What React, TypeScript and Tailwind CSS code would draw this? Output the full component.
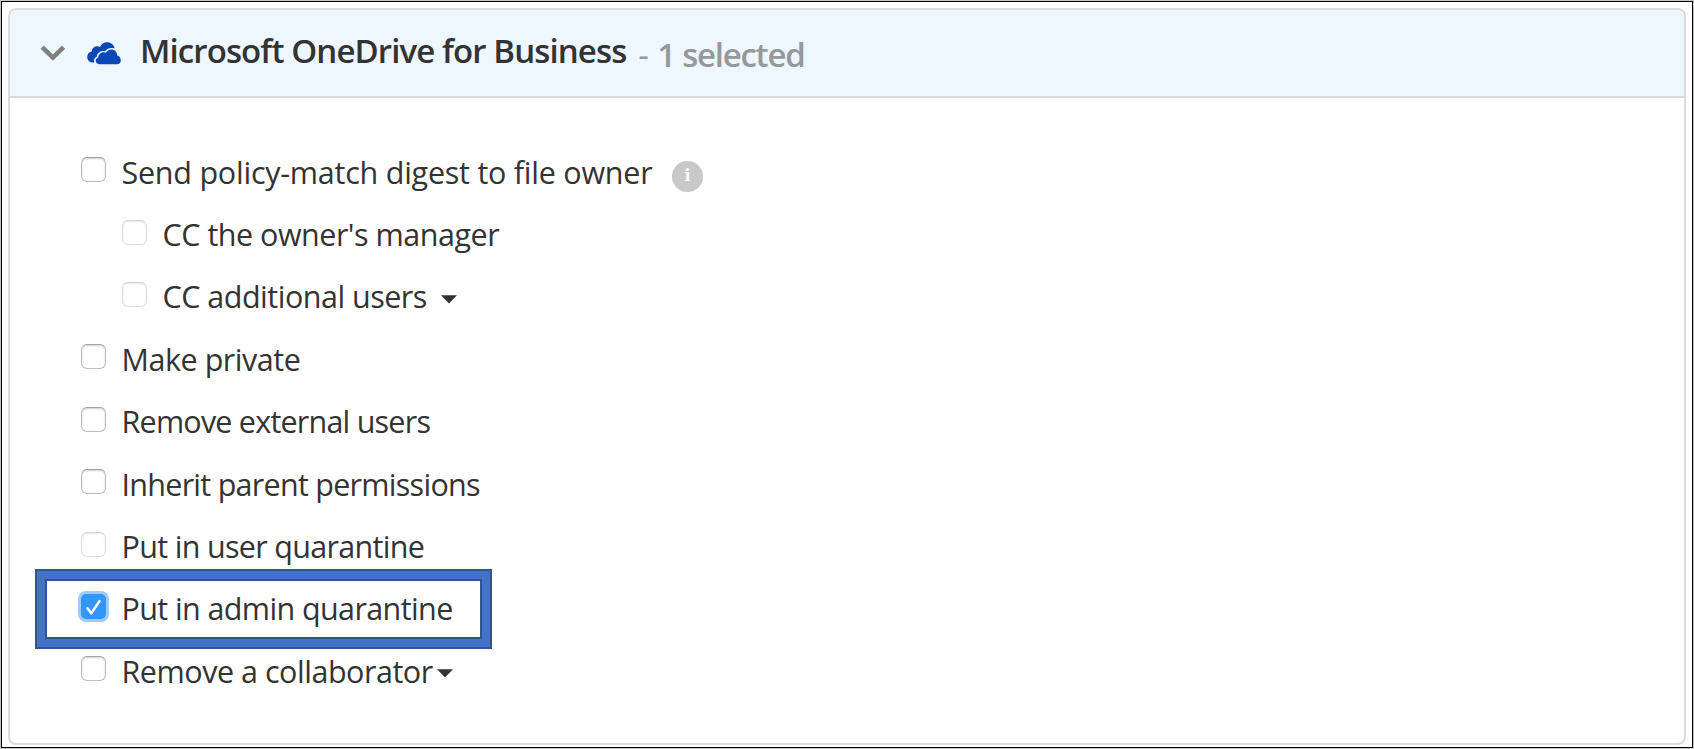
import clsx from "clsx";

type Action = {
  label: string;
  spacing: string;
  nested?: boolean;
  disabled?: boolean;
  checked?: boolean;
  info?: boolean;
  caret?: string;
};

const actions: Action[] = [
  { label: "Send policy-match digest to file owner", spacing: "tracking-[-0.24px]", info: true },
  { label: "CC the owner's manager", spacing: "tracking-[-0.49px]", nested: true, disabled: true },
  { label: "CC additional users", spacing: "tracking-[-0.5px]", nested: true, disabled: true, caret: "ml-[14px]" },
  { label: "Make private", spacing: "tracking-[-0.46px]" },
  { label: "Remove external users", spacing: "tracking-[-0.78px]" },
  { label: "Inherit parent permissions", spacing: "tracking-[-0.73px]" },
  { label: "Put in user quarantine", spacing: "tracking-[-0.68px]", disabled: true },
  { label: "Put in admin quarantine", spacing: "tracking-[-0.61px]", checked: true },
  { label: "Remove a collaborator", spacing: "tracking-[-0.47px]", caret: "ml-[4px]" },
];

function Checkbox({ checked, disabled }: { checked?: boolean; disabled?: boolean }) {
  if (checked) {
    return (
      <span className="mb-[3px] flex size-[25px] shrink-0 items-center justify-center rounded-[5px] bg-[#3395fe] shadow-[0_0_0_3px_#9ccbff]">
        <svg viewBox="0 0 25 25" className="size-[25px]" fill="none" stroke="white" strokeWidth="2.5" strokeLinecap="round" strokeLinejoin="round">
          <path d="M6.5 14.2 L10.3 19.2 L18.6 7" />
        </svg>
      </span>
    );
  }
  return (
    <span
      className={clsx(
        "mb-[3px] size-[25px] shrink-0 rounded-[6px] border-[1.5px] bg-white",
        disabled
          ? "border-[#dedede] border-t-[#d2d2d2] shadow-[inset_0_1px_2px_#e6e6e6]"
          : "border-[#bcbcbc] border-t-[#a2a2a2] shadow-[inset_0_1px_2px_#cfcfcf]",
      )}
    />
  );
}

function Highlight() {
  return (
    <span className="pointer-events-none absolute top-[-8px] left-[-46px] h-[80px] w-[457px] border-2 border-[#2f5597]">
      <span className="block h-full w-full border-8 border-[#4472c4]">
        <span className="block h-full w-full border-2 border-[#2f5597]" />
      </span>
    </span>
  );
}

function ActionRow({ label, spacing, nested, disabled, checked, info, caret }: Action) {
  return (
    <li className={clsx("relative flex h-[62.4px] items-center", nested && "pl-[41px]")}>
      {checked && <Highlight />}
      <Checkbox checked={checked} disabled={disabled} />
      <span className={clsx("mt-[1px] ml-[15.5px] whitespace-nowrap text-[30.5px] leading-[40px]", spacing)}>{label}</span>
      {info && (
        <span className="mt-[10px] ml-[19.5px] flex size-[31px] items-center justify-center rounded-full bg-[#c8c8c8] font-['DejaVu_Serif',serif] text-[16px] leading-none font-bold text-white">
          i
        </span>
      )}
      {caret && (
        <svg viewBox="0 0 16 9" className={clsx("mt-[7px] h-[9px] w-[16px]", caret)} fill="#333">
          <path d="M0 0.3H16L8 8.6Z" />
        </svg>
      )}
    </li>
  );
}

export default function App() {
  return (
    <div className="h-[749px] w-[1694px] border border-[#c6c7c3] bg-white font-['Open_Sans','Noto_Sans',sans-serif] text-[#333]">
      <div className="h-full border border-black px-[6px] pt-[6px] pb-[2px]">
        <section className="flex h-full flex-col overflow-hidden rounded-[8px] border-2 border-[#dcdcdc]">
          <header className="flex h-[88px] shrink-0 items-center border-b-2 border-[#d9dadb] bg-[#eef6ff]">
            <svg viewBox="0 0 26 18" className="ml-[30px] h-[18px] w-[26px]" fill="none" stroke="#808080" strokeWidth="4.6">
              <path d="M2.2 3.2 L12.9 13.6 L23.6 3.2" />
            </svg>
            <svg viewBox="0 0 34 23" className="ml-[20.5px] h-[23px] w-[34px]" fill="#0a48b8">
              <path d="M7.2 20.5H5.4A5.3 5.3 0 0 1 0.2 15.2C0.2 12.2 2.2 10 4.8 9.6C4.8 6.5 7.2 4.2 10.1 4.2C11.2 4.2 12.2 4.5 13 5C14.3 2 17 0.2 20 0.2C23.9 0.2 27 2.8 27.8 6.4C23.8 5.2 20.2 6.3 18 9.3C13.6 8.4 10.2 11 9.7 14.8C7.3 15.6 6.2 18 7.2 20.5Z" />
              <path d="M13 22.3C10.5 22.3 8.7 20.9 8.7 18.8C8.7 16.9 9.8 15.8 11.4 15.4C11.5 12 14.2 9.8 17.2 10.2C18 10.3 18.5 10.5 19 10.7C20.2 8.5 22.2 7.6 24.3 7.6C27.8 7.6 30.2 10.2 30.2 13.6C32.2 14 33.8 15.8 33.8 18.2C33.8 20.6 32.2 22.3 30 22.3Z" />
            </svg>
            <h2 className="mb-[5px] ml-[19.5px] whitespace-nowrap text-[33px] leading-[44px] font-semibold tracking-[-0.89px]">
              Microsoft OneDrive for Business
            </h2>
            <span className="mt-[3px] ml-[12px] flex gap-[9.5px] whitespace-nowrap text-[33px] leading-[44px] font-semibold tracking-[-1.25px] text-[#96999c]">
              <span className="font-normal">-</span>
              <span>1 selected</span>
            </span>
          </header>
          <ul className="pt-[42px] pl-[71px]">
            {actions.map((action) => (
              <ActionRow key={action.label} {...action} />
            ))}
          </ul>
        </section>
      </div>
    </div>
  );
}
